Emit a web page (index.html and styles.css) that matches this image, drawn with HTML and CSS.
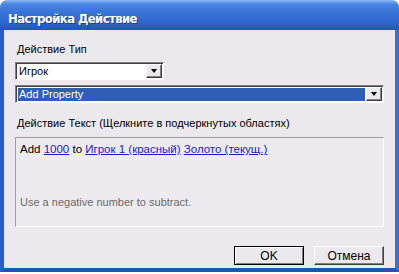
FILE: index.html
```html
<!DOCTYPE html>
<html>
<head>
<meta charset="utf-8">
<title>Настройка Действие</title>
<link rel="stylesheet" href="styles.css">
</head>
<body>
<div class="window">
  <div class="titlebar">Настройка Действие</div>
  <div class="frame">
    <div class="content">
      <div class="label">Действие Тип</div>
      <div class="combo combo-short">
        <span class="combo-text">Игрок</span>
        <span class="combo-btn"><span class="arrow"></span></span>
      </div>
      <div class="combo combo-long">
        <span class="combo-text selected">Add Property</span>
        <span class="combo-btn"><span class="arrow"></span></span>
      </div>
      <div class="label label-text">Действие Текст (Щелкните в подчеркнутых областях)</div>
      <div class="textbox">
        <div class="sentence">Add <a class="link">1000</a> to <a class="link">Игрок 1 (красный)</a> <a class="link">Золото (текущ.)</a></div>
        <div class="hint">Use a negative number to subtract.</div>
      </div>
      <div class="buttons">
        <span class="button default">OK</span>
        <span class="button">Отмена</span>
      </div>
    </div>
  </div>
</div>
</body>
</html>
```

FILE: styles.css
```css
/* Dialog in XP style */

body
{ margin: 0;
background-color: #ffffff;
font-family: "Liberation Sans", Arial, sans-serif;
font-size: 11px;
color: #000000;
}

div.window
{ width: 399px;
height: 272px;
display: flex;
flex-direction: column;
}

div.titlebar
{ height: 30px;
box-sizing: border-box;
padding: 11px 0 0 8px;
border-radius: 7px 7px 0 0;
background: linear-gradient(#8ab8f0 0px, #4a86e2 4px, #3a74d8 12px, #2d62cc 24px, #2452c0 30px);
color: #ffffff;
font-family: "Liberation Sans Narrow", "DejaVu Sans Condensed", "Liberation Sans", sans-serif;
font-size: 13px;
font-weight: bold;
letter-spacing: -0.6px;
line-height: 15px;
text-shadow: 1px 1px 0 #1b3f95;
}

div.frame
{ flex: 1;
display: flex;
border-left: 4px solid #2a5ccc;
border-right: 4px solid #3a6fd6;
border-bottom: 4px solid #2450c0;
}

div.content
{ flex: 1;
background-color: #ebe9ed;
padding: 13px 10px 0 11px;
}

div.label
{ height: 13px;
line-height: 13px;
padding-left: 2px;
}

div.label-text
{ margin-top: 14px;
}

/* Combo boxes */

div.combo
{ display: flex;
height: 18px;
box-sizing: border-box;
border-top: 1px solid #808080;
border-left: 1px solid #808080;
border-right: 1px solid #ffffff;
border-bottom: 1px solid #ffffff;
background-color: #ffffff;
box-shadow: inset 1px 1px 0 #404040;
}

div.combo-short
{ width: 149px;
margin-top: 6px;
}

div.combo-long
{ width: 369px;
margin-top: 5px;
}

span.combo-text
{ flex: 1;
line-height: 16px;
padding-left: 3px;
}

span.selected
{ background-color: #2f5eb4;
color: #ffffff;
margin: 2px 1px 1px 2px;
line-height: 13px;
padding-left: 1px;
}

span.combo-btn
{ width: 16px;
display: flex;
align-items: center;
justify-content: center;
box-sizing: border-box;
margin: 1px 1px 1px 0;
background-color: #ebe9ed;
border-top: 1px solid #ffffff;
border-left: 1px solid #ffffff;
border-right: 1px solid #404040;
border-bottom: 1px solid #404040;
box-shadow: inset -1px -1px 0 #808080;
}

span.arrow
{ width: 0;
height: 0;
border-left: 3px solid transparent;
border-right: 3px solid transparent;
border-top: 4px solid #000000;
margin-bottom: 1px;
}

/* Action text */

div.textbox
{ height: 90px;
width: 369px;
box-sizing: border-box;
margin-top: 7px;
padding: 4px 4px 0 4px;
display: flex;
flex-direction: column;
border-top: 1px solid #a0a0a0;
border-left: 1px solid #a0a0a0;
border-right: 1px solid #ffffff;
border-bottom: 1px solid #ffffff;
background-color: #edebef;
}

div.sentence
{ font-size: 11.5px;
line-height: 14px;
}

a.link
{ color: #1a1ad2;
text-decoration: underline;
}

div.hint
{ margin-top: 39px;
color: #6a6a6a;
line-height: 14px;
}

/* Buttons */

div.buttons
{ display: flex;
justify-content: flex-end;
gap: 10px;
margin-top: 19px;
padding-right: 1px;
}

span.button
{ width: 70px;
height: 19px;
box-sizing: border-box;
display: flex;
align-items: center;
justify-content: center;
background-color: #ebe9ed;
border-top: 1px solid #ffffff;
border-left: 1px solid #ffffff;
border-right: 1px solid #404040;
border-bottom: 1px solid #404040;
box-shadow: inset -1px -1px 0 #808080;
font-size: 12px;
}

span.default
{ border: 1px solid #000000;
box-shadow: inset 1px 1px 0 #ffffff, inset -1px -1px 0 #808080;
}
```
